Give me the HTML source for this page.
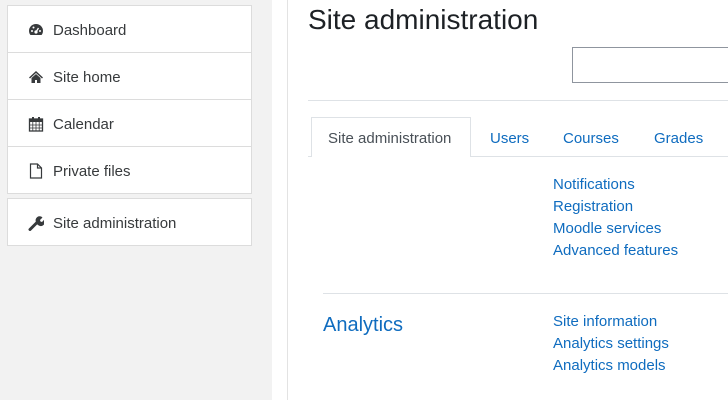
<!DOCTYPE html>
<html><head><style>
body{margin:0;width:728px;height:400px;overflow:hidden;background:#fff;font-family:"Liberation Sans",sans-serif;position:relative}
.side{position:absolute;left:0;top:0;width:272px;height:400px;background:#f2f2f2}
.vl{position:absolute;left:287px;top:0;width:1px;height:400px;background:#e3e3e3}
.grp{position:absolute;left:7px;width:243px;background:#fff;border:1px solid #dcdcdc}
.it{height:46px;border-bottom:1px solid #dcdcdc;display:flex;align-items:center;padding-left:45px;padding-top:2px;box-sizing:border-box;font-size:15px;color:#373a3c;position:relative}
.it:last-child{border-bottom:none}
.it svg{position:absolute;left:20px;top:16px}
.a{position:absolute;color:#0f6cbf;font-size:15px;white-space:nowrap}
</style></head><body>
<div class="side"></div>
<div class="vl"></div>
<div class="grp" style="top:5px">
<div class="it" style="height:47px"><svg width="16" height="16" viewBox="0 0 16 16"><path d="M8 2a7 7 0 0 0-7 7c0 2 1 3.5 1.5 4h11c.5-.5 1.5-2 1.5-4a7 7 0 0 0-7-7z" fill="#373a3c"/><circle cx="8" cy="10" r="1.6" fill="#fff"/><path d="M8 10l2.5-4" stroke="#fff" stroke-width="1.3"/><circle cx="4" cy="9" r="1" fill="#fff"/><circle cx="5.5" cy="5.5" r="1" fill="#fff"/><circle cx="12" cy="9" r="1" fill="#fff"/></svg>Dashboard</div>
<div class="it" style="height:47px"><svg width="16" height="16" viewBox="0 0 16 16"><path d="M8 2L1 8.5l1 1L8 4l6 5.5 1-1zM3.5 9v5h3.5v-3h2v3h3.5V9L8 5z" fill="#373a3c"/></svg>Site home</div>
<div class="it" style="height:47px"><svg width="16" height="16" viewBox="0 0 16 16"><rect x="1.5" y="3" width="13" height="12" fill="none" stroke="#373a3c" stroke-width="1.3"/><rect x="1.5" y="3" width="13" height="3" fill="#373a3c"/><path d="M5 1v4M11 1v4" stroke="#373a3c" stroke-width="2"/><path d="M1.5 9h13M1.5 12h13M4.8 6v9M8 6v9M11.2 6v9" stroke="#373a3c" stroke-width=".8"/></svg>Calendar</div>
<div class="it"><svg width="16" height="16" viewBox="0 0 16 16"><path d="M2.5 1h7l4 4v10h-11z M9.5 1v4h4" fill="none" stroke="#373a3c" stroke-width="1.2"/></svg>Private files</div>
</div>
<div class="grp" style="top:198px"><div class="it"><svg width="16" height="16" viewBox="0 0 16 16"><path d="M2 14.5l7-7" stroke="#373a3c" stroke-width="3" stroke-linecap="round"/><path d="M8 7a4 4 0 0 1 6.5-4.5L12 5l.5 1.5L14 7l2.3-2.4A4 4 0 0 1 9 9z" fill="#373a3c"/></svg>Site administration</div></div>

<div style="position:absolute;left:308px;top:4px;font-size:28px;color:#1d2125">Site administration</div>
<div style="position:absolute;left:572px;top:47px;width:170px;height:34px;border:1px solid #8f959e"></div>
<div style="position:absolute;left:308px;top:100px;width:420px;height:1px;background:#dee2e6"></div>
<div style="position:absolute;left:308px;top:156px;width:420px;height:1px;background:#dee2e6"></div>
<div style="position:absolute;left:311px;top:117px;width:160px;height:40px;border:1px solid #dee2e6;border-bottom:none;background:#fff;box-sizing:border-box"></div>
<div style="position:absolute;left:328px;top:130px;font-size:15px;color:#495057">Site administration</div>
<div class="a" style="left:490px;top:130px">Users</div>
<div class="a" style="left:563px;top:130px">Courses</div>
<div class="a" style="left:654px;top:130px">Grades</div>
<div class="a" style="left:553px;top:174px;line-height:22px">Notifications<br>Registration<br>Moodle services<br>Advanced features</div>
<div style="position:absolute;left:323px;top:293px;width:405px;height:1px;background:#dee2e6"></div>
<div class="a" style="left:323px;top:314px;font-size:20px">Analytics</div>
<div class="a" style="left:553px;top:311px;line-height:22px">Site information<br>Analytics settings<br>Analytics models</div>
</body></html>
